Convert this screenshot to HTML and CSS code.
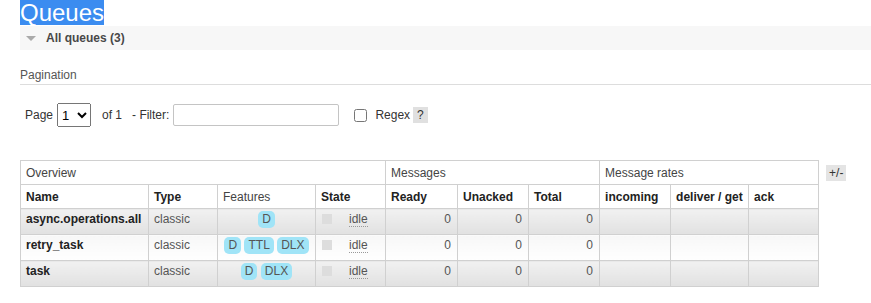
FILE: index.html
```
<html>
<head>
	<link rel="stylesheet" href="styles.css">
</head>
<body>
	<div class="main">
		<h1><span class="selected">Queues</span></h1>
		<div class="section-head">
			<svg class="arrow" width="10" height="6" viewBox="0 0 10 6"><polygon points="0,0 10,0 5,5" fill="#aaa"/></svg>
			<span>All queues (3)</span>
		</div>

		<h3 class="pagination-title">Pagination</h3>
		<div class="pager">
			<span class="lbl">Page</span>
			<select class="page-select"><option>1</option></select>
			<span class="lbl of">of 1</span>
			<span class="lbl filter">- Filter:</span>
			<input type="text" class="filter-input">
			<input type="checkbox" class="regex-box">
			<span class="lbl regex">Regex</span>
			<span class="help">?</span>
		</div>

		<div class="table-wrap">
			<table class="list">
				<colgroup>
					<col class="c-name"><col class="c-type"><col class="c-feat"><col class="c-state">
					<col class="c-ready"><col class="c-unacked"><col class="c-total">
					<col class="c-in"><col class="c-deliver"><col class="c-ack">
				</colgroup>
				<thead>
					<tr>
						<th colspan="4" class="group">Overview</th>
						<th colspan="3" class="group">Messages</th>
						<th colspan="3" class="group">Message rates</th>
					</tr>
					<tr>
						<th>Name</th>
						<th>Type</th>
						<th class="plain">Features</th>
						<th>State</th>
						<th>Ready</th>
						<th>Unacked</th>
						<th>Total</th>
						<th>incoming</th>
						<th>deliver / get</th>
						<th>ack</th>
					</tr>
				</thead>
				<tbody>
					<tr class="alt1">
						<td class="name">async.operations.all</td>
						<td>classic</td>
						<td class="c"><span class="pill">D</span></td>
						<td><span class="state-box"></span><span class="state">idle</span></td>
						<td class="r">0</td>
						<td class="r">0</td>
						<td class="r">0</td>
						<td></td><td></td><td></td>
					</tr>
					<tr class="alt2">
						<td class="name">retry_task</td>
						<td>classic</td>
						<td class="c"><span class="pill">D</span> <span class="pill">TTL</span> <span class="pill">DLX</span></td>
						<td><span class="state-box"></span><span class="state">idle</span></td>
						<td class="r">0</td>
						<td class="r">0</td>
						<td class="r">0</td>
						<td></td><td></td><td></td>
					</tr>
					<tr class="alt1">
						<td class="name">task</td>
						<td>classic</td>
						<td class="c"><span class="pill">D</span> <span class="pill">DLX</span></td>
						<td><span class="state-box"></span><span class="state">idle</span></td>
						<td class="r">0</td>
						<td class="r">0</td>
						<td class="r">0</td>
						<td></td><td></td><td></td>
					</tr>
				</tbody>
			</table>
			<span class="plus-minus">+/-</span>
		</div>
	</div>
</body>
</html>
```

FILE: styles.css
```
html, body {
	margin: 0;
	padding: 0;
	background: #fff;
}
body {
	font-family: "Liberation Sans", Arial, sans-serif;
	font-size: 12px;
	color: #444;
}
.main {
	padding-left: 20px;
}

h1 {
	margin: 0;
	height: 25px;
	font-size: 24px;
	font-weight: normal;
	line-height: 25px;
}
h1 .selected {
	display: inline-block;
	height: 25px;
	background: #3b8cf0;
	color: #fff;
}

.section-head {
	margin-top: 1px;
	height: 24px;
	background: #f7f7f7;
	display: flex;
	align-items: center;
	padding-left: 6px;
	font-weight: bold;
	color: #484848;
}
.section-head .arrow {
	margin-right: 10px;
	margin-top: 1px;
}

.pagination-title {
	margin: 18px 0 0 0;
	font-size: 12px;
	font-weight: normal;
	line-height: 14px;
	padding-bottom: 2px;
	color: #555;
	border-bottom: 1px solid #ddd;
}

.pager {
	margin-top: 18px;
	height: 24px;
	display: flex;
	align-items: center;
	padding-left: 5px;
	color: #333;
}
.page-select {
	margin: 0 0 0 4px;
	width: 34px;
	height: 24px;
	font-family: "Liberation Sans", Arial, sans-serif;
	font-size: 13px;
}
.lbl.of {
	margin-left: 11px;
}
.lbl.filter {
	margin-left: 10px;
}
.filter-input {
	margin: 0 0 0 4px;
	width: 166px;
	height: 22px;
	box-sizing: border-box;
	border: 1px solid #c4c4c4;
	border-radius: 2px;
}
.regex-box {
	margin: 0 0 0 15px;
	width: 13px;
	height: 13px;
}
.lbl.regex {
	margin-left: 8px;
}
.help {
	margin-left: 3px;
	padding: 1px 4px;
	background: #e0e0e0;
	line-height: 14px;
	color: #333;
}

.table-wrap {
	margin-top: 33px;
	display: flex;
	align-items: flex-start;
}
table.list {
	border-collapse: collapse;
	table-layout: fixed;
	width: 799px;
	font-family: "Liberation Sans", Arial, sans-serif;
	font-size: 12px;
}
.c-name { width: 128px; }
.c-type { width: 69px; }
.c-feat { width: 98px; }
.c-state { width: 70px; }
.c-ready { width: 72px; }
.c-unacked { width: 71px; }
.c-total { width: 71px; }
.c-in { width: 71px; }
.c-deliver { width: 78px; }
.c-ack { width: 70px; }

table.list th, table.list td {
	border: 1px solid #d0d0d0;
	text-align: left;
	vertical-align: top;
	font-size: 12px;
	line-height: 14px;
	white-space: nowrap;
}
table.list th {
	padding: 5px 5px 4px 5px;
	font-weight: bold;
	color: #222;
	background: #fff;
}
table.list th.group, table.list th.plain {
	font-weight: normal;
	color: #444;
}
table.list td {
	padding: 3px 5px 6px 5px;
	color: #555;
}
table.list td.name {
	font-weight: bold;
	color: #222;
}
table.list td.c {
	text-align: center;
}
table.list td.r {
	text-align: right;
	padding-right: 6px;
}
tr.alt1 > td {
	background: linear-gradient(#f1f1f1, #e1e1e1);
}
tr.alt2 > td {
	background: linear-gradient(#f7f7f7, #fff);
}

.pill {
	display: inline-block;
	vertical-align: top;
	height: 17px;
	line-height: 17px;
	margin-top: -1px;
	padding: 0 4px;
	border-radius: 5px;
	background: #a0e4f7;
	color: #555;
}
.state-box {
	display: inline-block;
	vertical-align: top;
	width: 10px;
	height: 10px;
	margin: 2px 17px 0 1px;
	background: #ddd;
}
.state {
	border-bottom: 1px dotted #999;
}

.plus-minus {
	margin: 5px 0 0 7px;
	padding: 1px 3px;
	line-height: 14px;
	background: #e4e4e4;
	color: #333;
}
```
